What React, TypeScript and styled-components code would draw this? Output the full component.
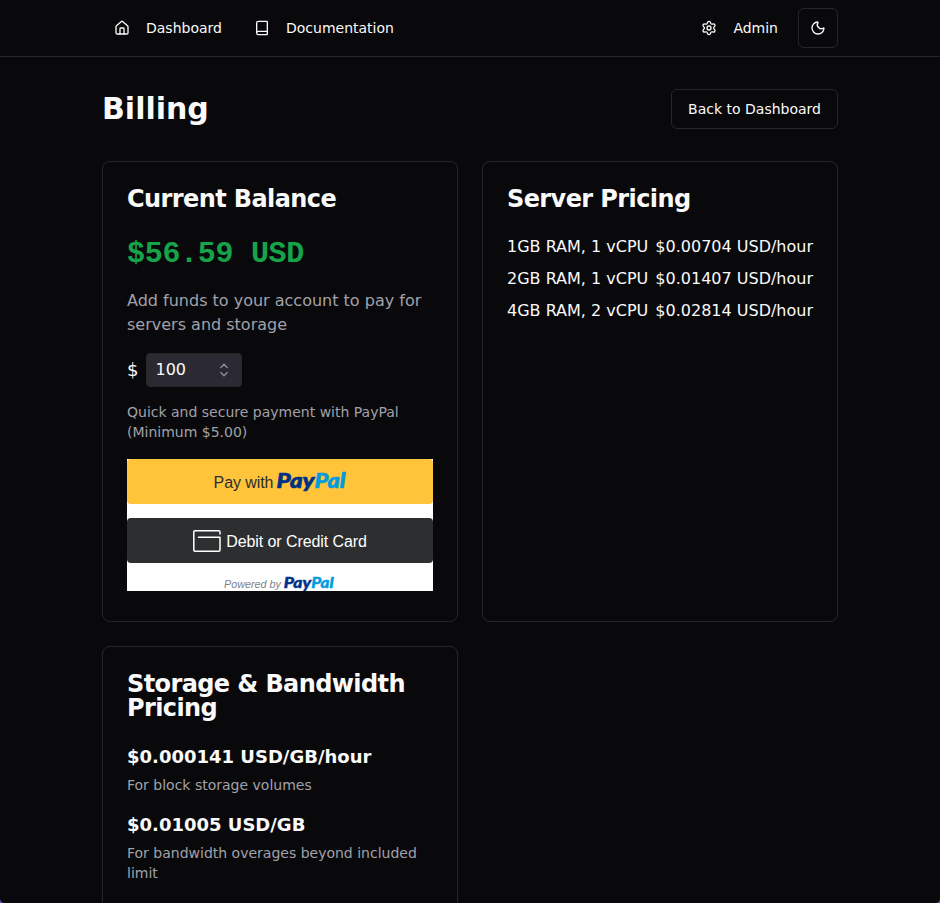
import React from "react";
import styled, { createGlobalStyle } from "styled-components";
import { House, Book, Settings, Moon } from "lucide-react";

const GlobalStyle = createGlobalStyle`
  * { box-sizing: border-box; }
  body { margin: 0; background: #09090b; }
  h1, h2, h3, p { margin: 0; }
`;

const Page = styled.div`
  position: relative;
  height: 903px;
  overflow: hidden;
  background: #09090b;
  color: #fafafa;
  font-family: "DejaVu Sans", sans-serif;
  font-size: 16px;
  line-height: 24px;
`;

const WindowCorner = styled.i<{ $side: "left" | "right" }>`
  position: absolute;
  bottom: 0;
  ${(p) => p.$side}: 0;
  width: 4px;
  height: 4px;
  background: radial-gradient(
    circle at ${(p) => (p.$side === "left" ? "100%" : "0")} 0,
    transparent 3.4px,
    #5b45c4 4.2px
  );
`;

const NavBar = styled.header`
  display: flex;
  justify-content: space-between;
  align-items: center;
  height: 57px;
  padding: 0 102px;
  border-bottom: 1px solid #27272a;
`;

const NavGroup = styled.nav`
  display: flex;
  align-items: center;
  gap: 8px;
`;

const NavLink = styled.a`
  display: flex;
  align-items: center;
  gap: 16px;
  padding: 0 12px;
  font-size: 14px;
  line-height: 20px;
`;

const Button = styled.button<{ $square?: boolean }>`
  display: flex;
  align-items: center;
  justify-content: center;
  height: 40px;
  width: ${(p) => (p.$square ? "40px" : "auto")};
  padding: 0 ${(p) => (p.$square ? 0 : 16)}px;
  border: 1px solid #27272a;
  border-radius: 6px;
  background: #09090b;
  color: #fafafa;
  font: 14px/20px "DejaVu Sans", sans-serif;
`;

const Main = styled.main`
  padding: 32px 102px 0;
`;

const TitleRow = styled.div`
  display: flex;
  justify-content: space-between;
  align-items: center;
  margin-bottom: 32px;
`;

const PageTitle = styled.h1`
  font-size: 30px;
  line-height: 36px;
  font-weight: 700;
`;

const CardGrid = styled.div`
  display: grid;
  grid-template-columns: 1fr 1fr;
  grid-template-rows: 461px auto;
  gap: 24px;
`;

const Card = styled.section`
  padding: 25px 24px 24px;
  border: 1px solid #27272a;
  border-radius: 8px;
`;

const CardTitle = styled.h2<{ $gap?: number }>`
  margin-bottom: ${(p) => p.$gap ?? 24}px;
  font-size: 24px;
  line-height: 24px;
  font-weight: 600;
  letter-spacing: -0.6px;
`;

const Balance = styled.div`
  color: #16a34a;
  font: 700 30px/36px "Liberation Mono", monospace;
  letter-spacing: -0.3px;
`;

const Description = styled.p`
  margin: 17px 0 16px;
  color: #a1a1aa;
`;

const AmountRow = styled.label`
  display: flex;
  align-items: center;
  gap: 8px;
`;

const Currency = styled.span`
  width: 11px;
  font-size: 18px;
`;

const AmountField = styled.span`
  display: flex;
  align-items: center;
  justify-content: space-between;
  width: 96px;
  height: 34px;
  padding: 0 13px 0 8.5px;
  border: 1px solid #27272a;
  border-radius: 4px;
  background: #2b2a33;
`;

const Note = styled.p`
  color: #a1a1aa;
  font-size: 14px;
  line-height: 20px;
`;

const AmountNote = styled(Note)`
  margin: 15px 0 17px;
`;

const PaymentPanel = styled.div`
  height: 132px;
  overflow: hidden;
  background: #fff;
  font-family: "Liberation Sans", sans-serif;
`;

const PaymentButton = styled.div<{ $dark?: boolean }>`
  display: flex;
  align-items: center;
  justify-content: center;
  gap: ${(p) => (p.$dark ? 5 : 4)}px;
  height: 45px;
  margin-bottom: 14px;
  padding-top: 2px;
  border-radius: 4px;
  background: ${(p) => (p.$dark ? "#2c2e2f" : "#ffc439")};
  color: ${(p) => (p.$dark ? "#fff" : "#2c2e2f")};
  font-size: 16px;
  line-height: 20px;
`;

const ButtonLabel = styled.span`
  letter-spacing: -0.08px;
`;

const Powered = styled.div`
  display: flex;
  justify-content: center;
  align-items: center;
  gap: 3px;
  height: 14px;
  padding-right: 2px;
  color: #7b8388;
  font-size: 10.8px;
  font-style: italic;
  line-height: 14px;
`;

const WordmarkSvg = styled.svg`
  display: block;
  flex: none;
  margin-bottom: 1px;
  overflow: visible;
  font-family: Lato, sans-serif;
  font-weight: 900;
  font-style: italic;
  stroke-width: 0.6;
  stroke-linejoin: round;
`;

const PriceList = styled.div`
  display: flex;
  flex-direction: column;
  gap: 8px;
`;

const PriceRow = styled.div`
  display: flex;
  justify-content: space-between;
  white-space: nowrap;
`;

const Rate = styled.div`
  margin-bottom: 16px;
`;

const RateValue = styled.h3`
  margin-bottom: 4px;
  font-size: 18px;
  line-height: 28px;
  font-weight: 600;
`;

const prices = [
  ["1GB RAM, 1 vCPU", "$0.00704 USD/hour"],
  ["2GB RAM, 1 vCPU", "$0.01407 USD/hour"],
  ["4GB RAM, 2 vCPU", "$0.02814 USD/hour"],
];

const rates = [
  ["$0.000141 USD/GB/hour", "For block storage volumes"],
  ["$0.01005 USD/GB", "For bandwidth overages beyond included limit"],
];

function PayPalWordmark({ width }: { width: number }) {
  return (
    <WordmarkSvg width={width} height={(width * 18) / 69} viewBox="0 0 69 18">
      <text x="-0.5" y="15" fontSize="20.5" fill="#003087" stroke="#003087" textLength="38" lengthAdjust="spacingAndGlyphs">Pay</text>
      <text x="37.5" y="15" fontSize="20.5" fill="#009cde" stroke="#009cde" textLength="31" lengthAdjust="spacingAndGlyphs">Pal</text>
    </WordmarkSvg>
  );
}

const CardSvg = styled.svg`
  margin-bottom: 2px;
`;

function CardIcon() {
  return (
    <CardSvg width="28" height="22" viewBox="0 0 28 22" fill="none" stroke="#fff" strokeWidth="1.5" strokeLinecap="round" strokeLinejoin="round">
      <path d="M27 4V2Q27 .8 25.8 .8H2Q.8 .8 .8 2V20Q.8 21.2 2 21.2H25.8Q27 21.2 27 20V7.2H5.5" />
    </CardSvg>
  );
}

function Stepper() {
  return (
    <svg width="8" height="14" viewBox="0 0 8 14" fill="none" stroke="#8f8e99" strokeWidth="1.3" strokeLinecap="round" strokeLinejoin="round">
      <path d="M.8 4.5 4 1.3l3.2 3.2M.8 9.5 4 12.7l3.2-3.2" />
    </svg>
  );
}

export default function App() {
  return (
    <Page>
      <GlobalStyle />
      <NavBar>
        <NavGroup>
          <NavLink><House size={16} />Dashboard</NavLink>
          <NavLink><Book size={16} />Documentation</NavLink>
        </NavGroup>
        <NavGroup>
          <NavLink><Settings size={16} />Admin</NavLink>
          <Button $square aria-label="Toggle theme"><Moon size={16} /></Button>
        </NavGroup>
      </NavBar>
      <Main>
        <TitleRow>
          <PageTitle>Billing</PageTitle>
          <Button>Back to Dashboard</Button>
        </TitleRow>
        <CardGrid>
          <Card>
            <CardTitle $gap={25}>Current Balance</CardTitle>
            <Balance>$56.59 USD</Balance>
            <Description>Add funds to your account to pay for servers and storage</Description>
            <AmountRow>
              <Currency>$</Currency>
              <AmountField>100<Stepper /></AmountField>
            </AmountRow>
            <AmountNote>Quick and secure payment with PayPal (Minimum $5.00)</AmountNote>
            <PaymentPanel>
              <PaymentButton><ButtonLabel>Pay with</ButtonLabel><PayPalWordmark width={69} /></PaymentButton>
              <PaymentButton $dark><CardIcon /><ButtonLabel>Debit or Credit Card</ButtonLabel></PaymentButton>
              <Powered>Powered by <PayPalWordmark width={50} /></Powered>
            </PaymentPanel>
          </Card>
          <Card>
            <CardTitle>Server Pricing</CardTitle>
            <PriceList>
              {prices.map(([plan, price]) => (
                <PriceRow key={plan}><span>{plan}</span><span>{price}</span></PriceRow>
              ))}
            </PriceList>
          </Card>
          <Card>
            <CardTitle $gap={23}>Storage &amp; Bandwidth Pricing</CardTitle>
            {rates.map(([value, note]) => (
              <Rate key={value}><RateValue>{value}</RateValue><Note>{note}</Note></Rate>
            ))}
          </Card>
        </CardGrid>
      </Main>
      <WindowCorner $side="left" />
      <WindowCorner $side="right" />
    </Page>
  );
}
